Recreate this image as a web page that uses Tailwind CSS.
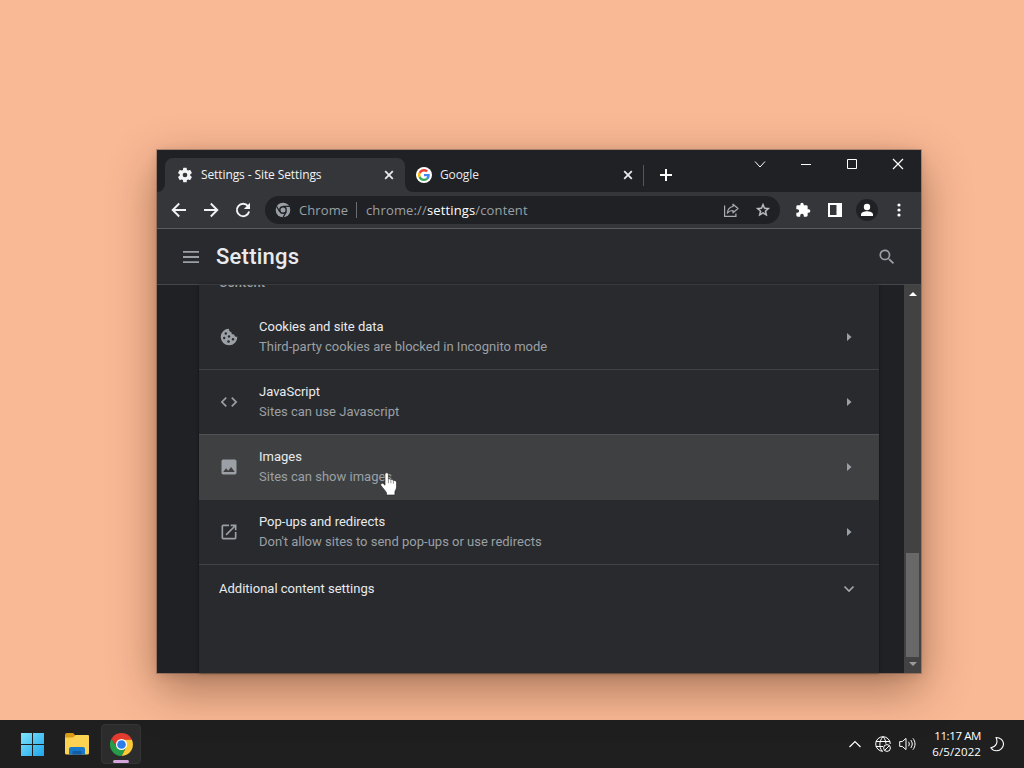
<!DOCTYPE html>
<html lang="en">
<head>
  <meta charset="UTF-8" />
  <meta name="viewport" content="width=device-width, initial-scale=1.0"/>
  <title>Settings - Site Settings</title>
  <script src="https://cdn.jsdelivr.net/npm/@tailwindcss/browser@4"></script>
</head>
<body class="relative w-[1024px] h-[768px] overflow-hidden flex flex-col justify-end bg-[#fab995] font-['Open_Sans','Noto_Sans',sans-serif]">

  <!-- Browser window -->
  <div class="absolute left-[157px] top-[150px] w-[764px] h-[523px] flex flex-col bg-[#292a2d] shadow-[0_16px_44px_rgba(50,25,5,0.42),0_2px_10px_rgba(50,25,5,0.15),0_0_0_1px_rgba(140,115,110,0.55)]">

    <!-- Tab strip -->
    <div class="h-[42px] shrink-0 flex bg-[#202124]">
      <div class="relative ml-2 mt-2 w-[240px] h-[34px] flex items-center">
        <svg class="absolute -left-2 top-0" width="256" height="34" viewBox="0 0 256 34"><path d="M0 34a8 8 0 0 0 8-8V8a8 8 0 0 1 8-8h224a8 8 0 0 1 8 8v18a8 8 0 0 0 8 8z" fill="#35363a"/></svg>
        <svg class="relative ml-3" width="16" height="16" viewBox="0 0 24 24" fill="#f1f3f4"><path fill-rule="evenodd" d="M19.900 13a8 8 0 0 0 0-2l2.200-1.700a.6.6 0 0 0 .1-.7l-2.300-4a.6.6 0 0 0-.7-.2l-2.600 1a8 8 0 0 0-1.700-1L14.500 1.500a.6.6 0 0 0-.6-.5h-4a.6.6 0 0 0-.6.5L8.900 4.400a8 8 0 0 0-1.700 1l-2.600-1a.6.6 0 0 0-.7.2l-2.200 4a.6.6 0 0 0 .1.7L4.100 11a8 8 0 0 0 0 2l-2.300 1.700a.6.6 0 0 0-.1.7l2.200 4c.2.2.4.3.7.2l2.600-1a8 8 0 0 0 1.700 1l.4 2.900c.1.3.3.5.6.5h4c.3 0 .5-.2.6-.5l.4-2.900a8 8 0 0 0 1.700-1l2.600 1c.3.1.5 0 .7-.2l2.300-4a.6.6 0 0 0-.1-.7zM12 15.500a3.500 3.500 0 1 1 0-7 3.500 3.500 0 0 1 0 7z"/></svg>
        <span class="relative ml-2 w-[180px] whitespace-nowrap text-[12px] tracking-[-0.1px] text-[#f1f3f4]">Settings - Site Settings</span>
        <svg class="relative ml-[2px]" width="12" height="12" viewBox="0 0 12 12" stroke="#e8eaed" stroke-width="1.8"><path d="M2.200 2.200l7.600 7.600M9.800 2.200L2.200 9.800"/></svg>
      </div>
      <div class="mt-2 w-[239px] h-[34px] flex items-center">
        <span class="ml-[11px] size-4 rounded-full bg-white flex items-center justify-center">
          <svg width="12" height="12" viewBox="0 0 48 48"><path fill="#EA4335" d="M24 9.500c3.500 0 6.700 1.200 9.200 3.600l6.900-6.900C35.900 2.400 30.500 0 24 0 14.600 0 6.500 5.400 2.600 13.200l8 6.200C12.400 13.700 17.700 9.500 24 9.500z"/><path fill="#4285F4" d="M47 24.600c0-1.600-.2-3.100-.4-4.600H24v9h12.900c-.6 3-2.300 5.500-4.800 7.200l7.700 6C44.400 38 47 31.800 47 24.600z"/><path fill="#FBBC05" d="M10.500 28.600a14.500 14.500 0 0 1 0-9.200l-8-6.200a24 24 0 0 0 0 21.600z"/><path fill="#34A853" d="M24 48c6.500 0 11.900-2.100 15.900-5.800l-7.700-6c-2.200 1.500-4.900 2.300-8.200 2.300-6.300 0-11.600-4.200-13.500-9.900l-8 6.200C6.500 42.600 14.600 48 24 48z"/></svg>
        </span>
        <span class="ml-2 w-[180px] text-[12px] tracking-[-0.1px] text-[#e8eaed]">Google</span>
        <svg class="ml-[2px]" width="12" height="12" viewBox="0 0 12 12" stroke="#e8eaed" stroke-width="1.8"><path d="M2.200 2.200l7.600 7.600M9.800 2.200L2.200 9.800"/></svg>
      </div>
      <div class="mt-[15px] -ml-[1px] w-px h-[21px] bg-[#54565a]"></div>
      <svg class="mt-[19px] ml-4" width="12" height="12" viewBox="0 0 12 12" stroke="#fff" stroke-width="2"><path d="M6 0v12M0 6h12"/></svg>
      <!-- Caption buttons -->
      <div class="ml-auto flex h-7 items-center">
        <svg width="46" height="28" viewBox="0 0 46 28" fill="none" stroke="#fff"><path d="M18 11.500l5 5.500 5-5.500"/></svg>
        <svg width="46" height="28" viewBox="0 0 46 28" fill="none" stroke="#fff"><path d="M18 14.500h10"/></svg>
        <svg width="46" height="28" viewBox="0 0 46 28" fill="none" stroke="#fff"><path d="M18.500 9.500h9v9h-9z"/></svg>
        <svg width="46" height="28" viewBox="0 0 46 28" fill="none" stroke="#fff" stroke-width="1.200"><path d="M18 9l10 10M28 9L18 19"/></svg>
      </div>
    </div>

    <!-- Toolbar -->
    <div class="h-[37px] shrink-0 flex items-center bg-[#35363a] border-b border-[#5b5c5e]">
      <svg class="ml-[14px]" width="16" height="16" viewBox="0 0 16 16" fill="none" stroke="#f1f3f4" stroke-width="1.900"><path d="M15 8H2M8.200 1.500L1.700 8l6.500 6.500"/></svg>
      <svg class="ml-4" width="16" height="16" viewBox="0 0 16 16" fill="none" stroke="#f1f3f4" stroke-width="1.900"><path d="M1 8h13M7.800 1.500L14.300 8l-6.500 6.500"/></svg>
      <svg class="ml-4" width="16" height="16" viewBox="0 0 16 16"><path d="M13 4.200A6.200 6.200 0 1 0 14.100 9.500" fill="none" stroke="#f1f3f4" stroke-width="1.900"/><path d="M15 .8v6.200H8.800z" fill="#f1f3f4"/></svg>
      <div class="ml-[14px] w-[515px] h-7 rounded-full bg-[#202124] flex items-center text-[13px]">
        <svg class="ml-[10px]" width="16" height="16" viewBox="0 0 16 16"><circle cx="8" cy="8" r="7.300" fill="#9aa0a6"/><circle cx="8" cy="8" r="3.900" fill="#202124"/><circle cx="8" cy="8" r="2.500" fill="#9aa0a6"/><path d="M8 4.300h6.600M4.800 9.900L1.500 4.200M11.200 9.900L7.900 15.600" stroke="#202124" stroke-width="1.200" fill="none"/></svg>
        <span class="ml-2 w-[50px] pt-px tracking-[0.1px] text-[#9aa0a6]">Chrome</span>
        <span class="ml-[7px] w-px h-4 bg-[#6a6d71]"></span>
        <span class="ml-[9px] pt-px whitespace-nowrap tracking-[0.14px] text-[#9aa0a6]">chrome://<span class="text-white">settings</span>/content</span>
        <svg class="ml-auto" width="16" height="16" viewBox="0 0 16 16" fill="none" stroke="#a9adb2" stroke-width="1.200"><path d="M1.600 3.500v10.900h11.300v-3"/><path d="M10 2.200l5 4.300-5 4.300V8.500c-2.500 0-4.400.8-5.700 2.700.3-3.600 2.200-6.200 5.700-6.700z" stroke-linejoin="round"/></svg>
        <svg class="ml-4 mr-[9px]" width="16" height="16" viewBox="0 0 24 24" fill="#c4c7cb"><path d="M22 9.200l-7.200-.6L12 2 9.200 8.600 2 9.200l5.500 4.800L5.800 21 12 17.300 18.200 21l-1.600-7zM12 15.400l-3.800 2.300 1-4.300-3.300-2.900 4.400-.4L12 6.100l1.700 4 4.400.4-3.300 2.900 1 4.300z" stroke="#c4c7cb" stroke-width=".6"/></svg>
      </div>
      <svg class="ml-[15px]" width="16" height="16" viewBox="0 0 24 24" fill="#fff"><path d="M20.500 11H19V7a2 2 0 0 0-2-2h-4V3.500a2.500 2.500 0 0 0-5 0V5H4a2 2 0 0 0-2 2v3.800h1.500a2.700 2.700 0 0 1 0 5.400H2V20c0 1.100.9 2 2 2h3.800v-1.500a2.700 2.700 0 0 1 5.400 0V22H17a2 2 0 0 0 2-2v-4h1.500a2.500 2.500 0 0 0 0-5z"/></svg>
      <svg class="ml-4" width="16" height="16" viewBox="0 0 16 16"><path d="M1 1h14v14H1z" fill="#fff"/><path d="M3 3h6.500v10H3z" fill="#35363a"/></svg>
      <span class="ml-[13px] size-[22px] rounded-full bg-[#202124] flex items-center justify-center">
        <svg width="14" height="14" viewBox="0 0 14 14" fill="#fff"><circle cx="7" cy="4" r="3.200"/><path d="M1 13v-1.500C1 9.300 4.500 8.200 7 8.200s6 1.100 6 3.300V13z"/></svg>
      </span>
      <svg class="ml-[18px]" width="6" height="16" viewBox="0 0 6 16" fill="#fff"><circle cx="3" cy="3" r="1.600"/><circle cx="3" cy="8" r="1.600"/><circle cx="3" cy="13" r="1.600"/></svg>
    </div>

    <!-- Page header -->
    <header class="h-[56px] shrink-0 flex items-center border-b border-[#46474a] font-['Roboto',sans-serif]">
      <svg class="ml-[26px]" width="16" height="12" viewBox="0 0 16 12" fill="#9aa0a6"><path d="M0 0h16v1.800H0zM0 5.100h16v1.800H0zM0 10.200h16V12H0z"/></svg>
      <h1 class="ml-[17px] text-[22px] tracking-[0.25px] font-medium text-[#e8eaed]">Settings</h1>
      <svg class="ml-auto mr-[24px]" width="20" height="20" viewBox="0 0 24 24" fill="#9aa0a6"><path d="M15.500 14h-.8l-.3-.3A6.500 6.500 0 1 0 13.700 14.400l.3.300v.8l5 5 1.500-1.500zM9.500 14a4.500 4.500 0 1 1 0-9 4.500 4.500 0 0 1 0 9z"/></svg>
    </header>

    <!-- Scrolled content -->
    <main class="flex-1 min-h-0 flex bg-[#202124] font-['Roboto',sans-serif]">
      <section class="ml-[42px] w-[680px] bg-[#292a2d] overflow-hidden text-[13px] leading-5 shadow-[0_0_3px_rgba(0,0,0,0.5)]">
        <div class="h-5 overflow-hidden pl-5"><p class="-mt-[12px] text-[#9aa0a6] font-medium">Content</p></div>

        <div class="h-[65px] flex items-center border-b border-[#414245] pl-5 pr-[27px]">
          <svg width="20" height="20" viewBox="0 0 20 20"><path d="M10 1.700a8.300 8.300 0 1 0 8.300 8c-1.700.4-3-.7-3-2.300-2 .3-3.200-.8-2.900-2.500C10.600 4.900 9.800 3.300 10 1.700z" fill="#9aa0a6"/><g fill="#292a2d"><circle cx="6.800" cy="6.500" r="1.200"/><circle cx="10" cy="9.500" r="1.200"/><circle cx="5.200" cy="11" r="1.200"/><circle cx="9.500" cy="14.500" r="1.300"/><circle cx="14" cy="12.200" r="1.200"/></g></svg>
          <div class="ml-5 flex-1"><p class="text-[#e8eaed]">Cookies and site data</p><p class="text-[#9aa0a6]">Third-party cookies are blocked in Incognito mode</p></div>
          <svg width="6" height="8" viewBox="0 0 6 8" fill="#9aa0a6"><path d="M1 0l4.500 4L1 8z"/></svg>
        </div>
        <div class="h-[65px] flex items-center border-b border-[#505153] pl-5 pr-[27px]">
          <svg width="20" height="20" viewBox="0 0 24 24" fill="#9aa0a6"><path d="M9.400 16.600L4.800 12l4.600-4.600L8 6l-6 6 6 6zm5.200 0l4.600-4.600-4.600-4.600L16 6l6 6-6 6z"/></svg>
          <div class="ml-5 flex-1"><p class="text-[#e8eaed]">JavaScript</p><p class="text-[#9aa0a6]">Sites can use Javascript</p></div>
          <svg width="6" height="8" viewBox="0 0 6 8" fill="#9aa0a6"><path d="M1 0l4.500 4L1 8z"/></svg>
        </div>
        <!-- hovered row -->
        <div class="h-[65px] flex items-center border-b border-[#3f4042] bg-[#3f4041] pl-5 pr-[27px]">
          <svg width="20" height="20" viewBox="0 0 24 24" fill="#9aa0a6"><path d="M21 19V5a2 2 0 0 0-2-2H5a2 2 0 0 0-2 2v14c0 1.100.9 2 2 2h14a2 2 0 0 0 2-2zM8.500 13.500l2.500 3 3.500-4.500 4.500 6H5z"/></svg>
          <div class="ml-5 flex-1"><p class="text-[#e8eaed]">Images</p><p class="text-[#9aa0a6]">Sites can show images</p></div>
          <svg width="6" height="8" viewBox="0 0 6 8" fill="#9aa0a6"><path d="M1 0l4.500 4L1 8z"/></svg>
        </div>
        <div class="h-[65px] flex items-center border-b border-[#414245] pl-5 pr-[27px]">
          <svg width="20" height="20" viewBox="0 0 24 24" fill="#9aa0a6"><path d="M19 19H5V5h7V3H5a2 2 0 0 0-2 2v14a2 2 0 0 0 2 2h14a2 2 0 0 0 2-2v-7h-2zM14 3v2h3.600l-9.800 9.800 1.400 1.400L19 6.400V10h2V3z"/></svg>
          <div class="ml-5 flex-1"><p class="text-[#e8eaed]">Pop-ups and redirects</p><p class="text-[#9aa0a6]">Don't allow sites to send pop-ups or use redirects</p></div>
          <svg width="6" height="8" viewBox="0 0 6 8" fill="#9aa0a6"><path d="M1 0l4.500 4L1 8z"/></svg>
        </div>
        <div class="h-12 flex items-center justify-between pl-5 pr-[24px]">
          <p class="text-[#e8eaed]">Additional content settings</p>
          <svg width="12" height="8" viewBox="0 0 12 8" fill="none" stroke="#a4a9ae" stroke-width="1.600"><path d="M1.500 1.500L6 6l4.500-4.500"/></svg>
        </div>
      </section>
      <!-- Scrollbar -->
      <div class="ml-auto w-[17px] bg-[#424242] flex flex-col items-center">
        <svg class="mt-[7px]" width="8" height="4" viewBox="0 0 8 4" fill="#fff"><path d="M0 4l4-4 4 4z"/></svg>
        <div class="mt-auto w-[13px] h-[104px] bg-[#686868]"></div>
        <svg class="mt-[5px] mb-[7px]" width="8" height="4" viewBox="0 0 8 4" fill="#9b9b9b"><path d="M0 0l4 4 4-4z"/></svg>
      </div>
    </main>
  </div>

  <!-- Hand cursor -->
  <svg class="absolute left-[380px] top-[472px]" width="18" height="24" viewBox="0 0 18 24"><path d="M5 2.500c0-2.300 3.400-2.300 3.400 0v4.700c.7-.6 2.100-.4 2.400.6.800-.6 2.200-.2 2.500.8 1.200-.5 3.200.1 3.200 1.900v4.500c0 2-1.200 3.200-1.600 4.500V23H6.500v-2.300C5.500 19 3 16.300 1 13.500c-.9-1.900 1.200-2.900 2.500-1.700L5 13.200z" fill="#fff" stroke="#222" stroke-width=".6"/><path d="M8.400 7.500v3.600M10.900 8.300v3M13.400 9.100v2.500" stroke="#444" stroke-width=".6"/></svg>

  <!-- Taskbar -->
  <footer class="h-12 flex items-center bg-[#1f1f1f] text-white">
    <svg class="ml-[21px]" width="23" height="23" viewBox="0 0 23 23">
      <defs><linearGradient id="win" x1="0" y1="0" x2="1" y2="1"><stop offset="0" stop-color="#7ee4fb"/><stop offset="1" stop-color="#1fa5ec"/></linearGradient></defs>
      <path d="M0 0h11v11H0zM12 0h11v11H12zM0 12h11v11H0zM12 12h11v11H12z" fill="url(#win)"/>
    </svg>
    <svg class="ml-[21px]" width="24" height="22" viewBox="0 0 24 22"><path d="M0 2a2 2 0 0 1 2-2h6l2 2v4H0z" fill="#d99a16"/><path d="M0 4.500h8L10.500 2H23a1 1 0 0 1 1 1v17a1.500 1.500 0 0 1-1.500 1.500h-21A1.500 1.500 0 0 1 0 20z" fill="#fcd252"/><path d="M4 21.500V16a2 2 0 0 1 2-2h12a2 2 0 0 1 2 2v5.500z" fill="#1878ca"/><path d="M7.500 21.500V19a1 1 0 0 1 1-1h7a1 1 0 0 1 1 1v2.500z" fill="#135da5"/></svg>
    <div class="relative ml-3 w-10 h-10 rounded bg-[#2c2c2c] border border-[#343434] flex items-center justify-center">
      <svg width="23" height="23" viewBox="0 0 24 24"><path d="M12 6.500h10.600A12 12 0 0 1 12 24l4.800-9.200z" fill="#fcc934"/><path d="M1.600 6l5.600 8.800h9.600L12 24A12 12 0 0 1 1.600 6z" fill="#269c4a"/><path d="M1.600 6A12 12 0 0 1 22.400 6l.4 1H12l-4.800 7.800z" fill="#e33b2e"/><circle cx="12" cy="12" r="5.800" fill="#fff"/><circle cx="12" cy="12" r="4.500" fill="#2b7de9"/></svg>
      <span class="absolute bottom-0 left-[11px] w-4 h-[3px] rounded-full bg-[#d5a6dc]"></span>
    </div>
    <!-- Tray -->
    <svg class="ml-auto" width="12" height="8" viewBox="0 0 12 8" fill="none" stroke="#fff" stroke-width="1.200"><path d="M.5 7L6 1.500 11.500 7"/></svg>
    <svg class="ml-[14px]" width="16" height="16" viewBox="0 0 16 16" fill="none" stroke="#fff"><path d="M8 15.300A7.300 7.300 0 1 1 15.300 8M.9 5.500h14.200M.9 10.500H8M7 15C4 11 4 5 8 .7M8 .7c2 2 2.900 4.600 2.900 7"/><circle cx="12" cy="12" r="3.400"/><path d="M9.700 14.300l4.600-4.600"/></svg>
    <svg class="ml-2" width="17" height="16" viewBox="0 0 17 16" fill="none" stroke="#fff"><path d="M.7 5.600h2.500L7 2.400v11.200l-3.800-3.200H.7zM9.500 5.800c1 1.300 1 3.100 0 4.400M11.700 4c2 2.500 2 5.500 0 8M13.900 2.300c2.800 3.500 2.800 7.900 0 11.400" stroke-linejoin="round"/></svg>
    <div class="ml-[15px] w-[50px] text-right text-[11.500px] leading-4 whitespace-nowrap"><p class="tracking-[-0.4px]">11:17 AM</p><p class="tracking-[0.1px]">6/5/2022</p></div>
    <svg class="ml-[9px] mr-5" width="14" height="16" viewBox="0 0 14 16" fill="none" stroke="#fff" stroke-width="1.100"><path d="M6 1.500c4.500 0 7.500 3 7.500 6.500s-3 6.700-6.800 6.700C4 14.700 2 13.500.8 11.700 5.800 11 8.500 6.500 6 1.500z" stroke-linejoin="round"/></svg>
  </footer>

</body>
</html>
